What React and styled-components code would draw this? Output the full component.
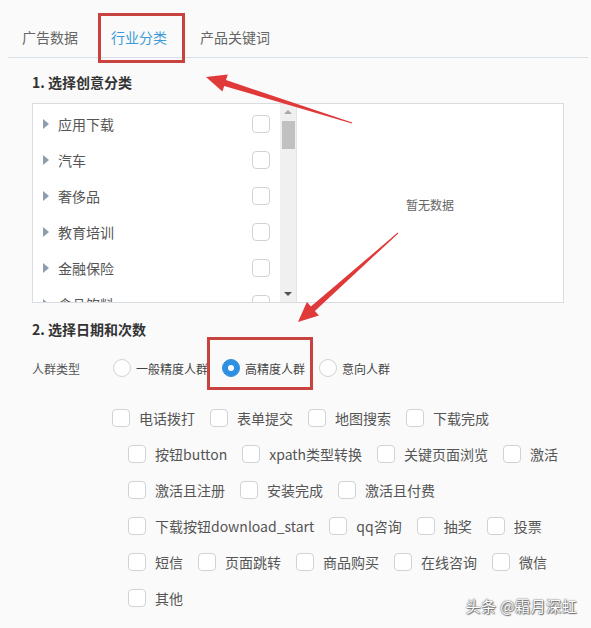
import React from "react";
import styled, { createGlobalStyle } from "styled-components";

const Global = createGlobalStyle`
  html, body { margin: 0; padding: 0; background: #fafafa; }
  body { font-family: "Microsoft YaHei", "Noto Sans CJK SC", "Noto Sans", sans-serif; color: #555; }
  * { box-sizing: border-box; }
`;

const Page = styled.div`
  position: relative;
  width: 591px;
  height: 628px;
  overflow: hidden;
  background: #fafafa;
`;

const TabBar = styled.div`
  display: flex;
  gap: 33px;
  height: 58px;
  margin: 0 3px 0 8px;
  padding: 28px 0 0 14px;
  border-bottom: 1px solid #d9e1e8;
`;

const Tab = styled.div`
  position: relative;
  font-size: 14px;
  line-height: 18px;
  height: 18px;
  color: ${(p) => (p.$active ? "#3d9ad6" : "#666")};
  ${(p) =>
    p.$mark &&
    `&::after {
      content: "";
      position: absolute;
      left: -13px; right: -18px; top: -15px; bottom: -17px;
      border: 3px solid #c8423f;
    }`}
`;

const Content = styled.div`
  padding-left: 32px;
`;

const SectionTitle = styled.div`
  font-size: 14px;
  font-weight: bold;
  line-height: 20px;
  color: #333;
  margin-top: ${(p) => p.$mt}px;
`;

const ListBox = styled.div`
  display: flex;
  width: 532px;
  height: 200px;
  margin-top: 11px;
  border: 1px solid #d8dde2;
  background: #fff;
`;

const TreeList = styled.div`
  width: 247px;
  padding-top: 2px;
  overflow: hidden;
`;

const TreeRow = styled.div`
  display: flex;
  align-items: center;
  height: 36px;
  padding: 0 10px 0 10px;
  font-size: 14px;
  color: #555;
`;

const Caret = styled.span`
  width: 0;
  height: 0;
  border-top: 5px solid transparent;
  border-bottom: 5px solid transparent;
  border-left: 6px solid #8d9cae;
  margin-right: 9px;
`;

const TreeLabel = styled.span`
  flex: 1;
  line-height: 18px;
`;

const Box = styled.span`
  display: inline-block;
  flex: none;
  width: 18px;
  height: 18px;
  border: 1px solid #cfd3d8;
  border-radius: 4px;
  background: #fff;
`;

const ScrollTrack = styled.div`
  width: 16px;
  background: #f0f0f0;
  display: flex;
  flex-direction: column;
  align-items: center;
  padding: 6px 0 6px;
`;

const ScrollArrow = styled.span`
  width: 0;
  height: 0;
  border-left: 4px solid transparent;
  border-right: 4px solid transparent;
  ${(p) => (p.$up ? "border-bottom: 4px solid #a8a8a8;" : "border-top: 4px solid #505050;")}
`;

const Thumb = styled.div`
  width: 13px;
  height: 28px;
  margin-top: 7px;
  background: #c1c1c1;
`;

const ScrollSpacer = styled.div`
  flex: 1;
`;

const EmptyPanel = styled.div`
  flex: 1;
  display: flex;
  align-items: center;
  justify-content: center;
  border-left: 1px solid #e4e4e4;
  font-size: 12px;
  color: #666;
  padding-top: 2px;
`;

const RadioRow = styled.div`
  display: flex;
  align-items: center;
  height: 20px;
  margin-top: 19px;
  font-size: 12px;
`;

const RadioLabel = styled.span`
  width: 81px;
  color: #555;
`;

const RadioOption = styled.label`
  position: relative;
  display: flex;
  align-items: center;
  gap: 5px;
  margin-right: 14px;
  color: #444;
  ${(p) =>
    p.$mark &&
    `&::after {
      content: "";
      position: absolute;
      left: -15px; right: -8px; top: -22px; bottom: -13px;
      border: 3px solid #c8423f;
    }`}
`;

const RadioDot = styled.span`
  width: 18px;
  height: 18px;
  border-radius: 50%;
  border: 1px solid ${(p) => (p.$on ? "#2f8fe0" : "#cfd3d8")};
  background: ${(p) => (p.$on ? "#2f8fe0" : "#fff")};
  display: flex;
  align-items: center;
  justify-content: center;
  &::after {
    content: "";
    width: 6px;
    height: 6px;
    border-radius: 50%;
    background: ${(p) => (p.$on ? "#fff" : "transparent")};
  }
`;

const CheckGroup = styled.div`
  margin-top: 22px;
  display: flex;
  flex-direction: column;
`;

const CheckRow = styled.div`
  display: flex;
  align-items: center;
  height: 36px;
  padding-left: ${(p) => p.$indent}px;
`;

const CheckItem = styled.label`
  display: flex;
  align-items: center;
  gap: 9px;
  margin-right: 15px;
  font-size: 14px;
  line-height: 18px;
  color: #555;
`;

const Watermark = styled.div`
  position: absolute;
  right: 14px;
  bottom: 12px;
  font-size: 15px;
  color: #fff;
  letter-spacing: 0.5px;
  text-shadow: 0 0 1px #555, 0 0 2px #666, 1px 1px 1px #777;
`;

const Overlay = styled.svg`
  position: absolute;
  left: 0;
  top: 0;
  pointer-events: none;
`;

const categories = ["应用下载", "汽车", "奢侈品", "教育培训", "金融保险", "食品饮料"];

const checkRows = [
  { indent: 80, items: ["电话拨打", "表单提交", "地图搜索", "下载完成"] },
  { indent: 96, items: ["按钮button", "xpath类型转换", "关键页面浏览", "激活"] },
  { indent: 96, items: ["激活且注册", "安装完成", "激活且付费"] },
  { indent: 96, items: ["下载按钮download_start", "qq咨询", "抽奖", "投票"] },
  { indent: 96, items: ["短信", "页面跳转", "商品购买", "在线咨询", "微信"] },
  { indent: 96, items: ["其他"] },
];

export default function App() {
  return (
    <Page>
      <Global />
      <TabBar>
        <Tab>广告数据</Tab>
        <Tab $active $mark>
          行业分类
        </Tab>
        <Tab>产品关键词</Tab>
      </TabBar>
      <Content>
        <SectionTitle $mt={14}>1. 选择创意分类</SectionTitle>
        <ListBox>
          <TreeList>
            {categories.map((c) => (
              <TreeRow key={c}>
                <Caret />
                <TreeLabel>{c}</TreeLabel>
                <Box />
              </TreeRow>
            ))}
          </TreeList>
          <ScrollTrack>
            <ScrollArrow $up />
            <Thumb />
            <ScrollSpacer />
            <ScrollArrow />
          </ScrollTrack>
          <EmptyPanel>暂无数据</EmptyPanel>
        </ListBox>
        <SectionTitle $mt={16}>2. 选择日期和次数</SectionTitle>
        <RadioRow>
          <RadioLabel>人群类型</RadioLabel>
          <RadioOption>
            <RadioDot />
            一般精度人群
          </RadioOption>
          <RadioOption $mark>
            <RadioDot $on />
            高精度人群
          </RadioOption>
          <RadioOption>
            <RadioDot />
            意向人群
          </RadioOption>
        </RadioRow>
        <CheckGroup>
          {checkRows.map((row, i) => (
            <CheckRow key={i} $indent={row.indent}>
              {row.items.map((it) => (
                <CheckItem key={it}>
                  <Box />
                  {it}
                </CheckItem>
              ))}
            </CheckRow>
          ))}
        </CheckGroup>
      </Content>
      <Overlay width="591" height="628" viewBox="0 0 591 628">
        <polygon
          fill="#e0393a"
          points="206,77 227.8,74.4 226,80.1 352.2,122.5 351.9,123.5 224.2,85.9 222.4,91.6"
        />
        <polygon
          fill="#e0393a"
          points="298,322 306.9,302 310.9,306.5 397.7,232.6 398.3,233.4 314.9,310.9 318.9,315.4"
        />
      </Overlay>
      <Watermark>头条 @霜月深虹</Watermark>
    </Page>
  );
}
